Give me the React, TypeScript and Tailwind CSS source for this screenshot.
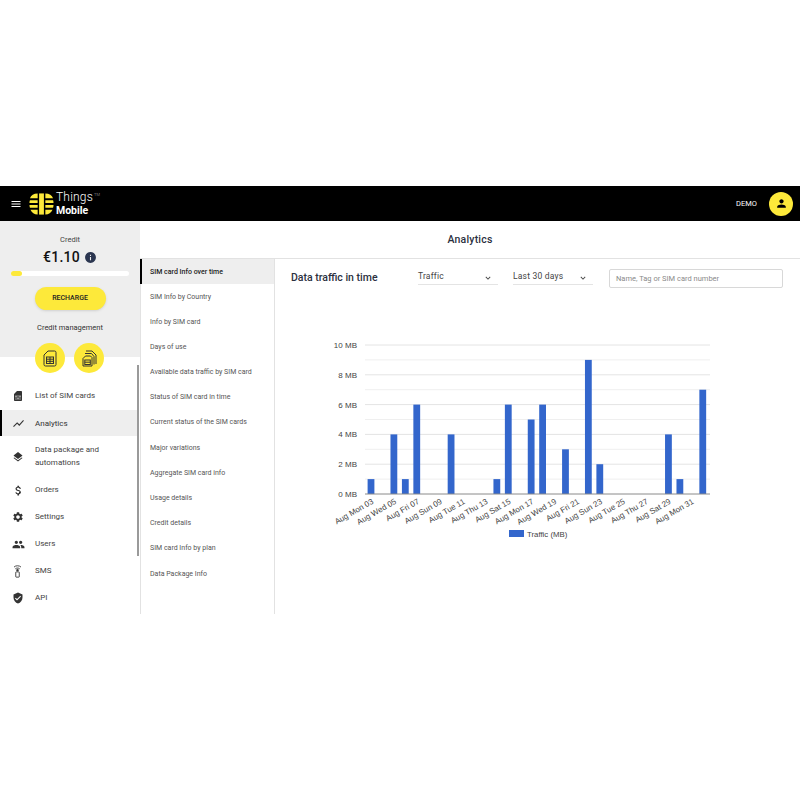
import { MdAttachMoney, MdExpandMore, MdInfo, MdLayers, MdMenu, MdPeople, MdPerson, MdSettings, MdShowChart, MdSimCard, MdVerifiedUser } from 'react-icons/md'
import type { ReactNode } from 'react'

const reports = [
  'SIM card Info over time',
  'SIM Info by Country',
  'Info by SIM card',
  'Days of use',
  'Available data traffic by SIM card',
  'Status of SIM card in time',
  'Current status of the SIM cards',
  'Major variations',
  'Aggregate SIM card info',
  'Usage details',
  'Credit details',
  'SIM card Info by plan',
  'Data Package Info',
]

const dayLabels = [
  'Aug Mon 03', 'Aug Wed 05', 'Aug Fri 07', 'Aug Sun 09', 'Aug Tue 11',
  'Aug Thu 13', 'Aug Sat 15', 'Aug Mon 17', 'Aug Wed 19', 'Aug Fri 21',
  'Aug Sun 23', 'Aug Tue 25', 'Aug Thu 27', 'Aug Sat 29', 'Aug Mon 31',
]

// day index -> MB
const traffic: [number, number][] = [
  [0, 1], [2, 4], [3, 1], [4, 6], [7, 4], [11, 1], [12, 6], [14, 5],
  [15, 6], [17, 3], [19, 9], [20, 2], [26, 4], [27, 1], [29, 7],
]

function Logo() {
  return (
    <svg width="25" height="24" viewBox="0 0 26 24">
      <path d="M9 1C5 1 2 3 1 6h8zM1 8c-.5 1-.5 2.500-.5 3h8.500V8zM.5 13c0 1 .2 2 .5 3h8v-3zM1.500 18c1.500 3 4 5 7.500 5v-5z" fill="#fde93a" />
      <path d="M17 1c4 0 7 2 8 5h-8zM25 8c.5 1 .5 2.500.5 3H17V8zM25.500 13c0 1-.2 2-.5 3h-8v-3zM24.500 18c-1.500 3-4 5-7.500 5v-5z" fill="#fde93a" />
      <rect x="10.500" y="1" width="5" height="22" fill="#fde93a" />
    </svg>
  )
}

function SimOne() {
  return (
    <svg width="14" height="17" viewBox="0 0 14 17" fill="none" stroke="#333" strokeWidth="1">
      <path d="M5 1h6.500A1.500 1.500 0 0 1 13 2.500v12a1.500 1.500 0 0 1-1.500 1.500h-9A1.500 1.500 0 0 1 1 14.500V5z" />
      <rect x="3.500" y="7" width="7" height="6.500" />
      <path d="M3.500 9.200h7M3.500 11.300h7M7 7v6.500" />
    </svg>
  )
}

function SimStack() {
  return (
    <svg width="15" height="17" viewBox="0 0 15 17" fill="none" stroke="#333" strokeWidth="1">
      <path d="M4 1h6l4 4v9" />
      <path d="M3 3.500h6.500l2.500 3v8" />
      <path d="M3.500 6h5l1.500 1.500v8.500H1V8.500z" />
      <rect x="2.800" y="10" width="5.500" height="4.500" />
      <path d="M2.800 12.200h5.500" />
    </svg>
  )
}

function Antenna() {
  return (
    <svg width="11" height="14" viewBox="0 0 12 16" fill="none" stroke="#333" strokeWidth="1">
      <path d="M2 3.500C4 1.500 8 1.500 10 3.500M3.500 5.500c1.500-1.200 3.500-1.200 5 0" />
      <circle cx="6" cy="7" r="1" fill="#333" />
      <rect x="4" y="9" width="4" height="6" rx="0.500" />
    </svg>
  )
}

function NavRow({ icon, children, height }: { icon: ReactNode; children: ReactNode; height: string }) {
  return (
    <div className={`flex items-center border-l-2 border-transparent pt-[1px] pl-[10px] ${height}`}>
      <div className="flex w-[23px] shrink-0 justify-start text-[#333]">{icon}</div>
      <div className="text-[8px] leading-[12.500px] text-[#444]">{children}</div>
    </div>
  )
}

function Sidebar() {
  return (
    <aside className="relative w-[140px] shrink-0">
      <div className="flex h-[136px] flex-col items-center bg-[#eeeeee]">
        <div className="mt-[14px] shrink-0 text-[7.500px] leading-[10px] text-[#444]">Credit</div>
        <div className="mt-[2px] flex shrink-0 items-center gap-[4px]">
          <span className="text-[14px] leading-[20px] font-medium tracking-[0.3px] text-[#111]">€1.10</span>
          <MdInfo size={13} className="text-[#2b3650]" />
        </div>
        <div className="mt-[4px] h-[5px] w-[118px] shrink-0 rounded-full bg-white">
          <div className="h-full w-[11px] rounded-full bg-[#fde93a]" />
        </div>
        <div className="mt-[11px] flex h-[23px] w-[71px] shrink-0 items-center justify-center rounded-full bg-[#fde93a] text-[7px] font-medium text-[#222] shadow-sm">
          RECHARGE
        </div>
        <div className="mt-[13px] shrink-0 text-[7.500px] leading-[10px] text-[#333]">Credit management</div>
        <div className="mt-[10px] -ml-[1px] flex shrink-0 gap-[9px]">
          <div className="flex h-[30px] w-[30px] items-center justify-center rounded-full bg-[#fde93a]"><SimOne /></div>
          <div className="flex h-[30px] w-[30px] items-center justify-center rounded-full bg-[#fde93a]"><SimStack /></div>
        </div>
      </div>
      <nav className="mt-[25px] flex flex-col">
        <NavRow height="h-[27px]" icon={<MdSimCard size={12} />}>List of SIM cards</NavRow>
        <div className="mt-[1px] flex h-[26px] w-[137px] items-center border-l-2 border-black bg-[#eeeeee] pt-[1px] pl-[10px]">
          <div className="flex w-[23px] shrink-0 text-[#333]"><MdShowChart size={13} /></div>
          <div className="text-[8px] text-[#333]">Analytics</div>
        </div>
        <NavRow height="h-[40px]" icon={<MdLayers size={12} />}><span className="block w-[80px]">Data package and automations</span></NavRow>
        <NavRow height="h-[27px]" icon={<MdAttachMoney size={13} />}>Orders</NavRow>
        <NavRow height="h-[27px]" icon={<MdSettings size={12} />}>Settings</NavRow>
        <NavRow height="h-[27px]" icon={<MdPeople size={13} />}>Users</NavRow>
        <NavRow height="h-[27px]" icon={<Antenna />}>SMS</NavRow>
        <NavRow height="h-[27px]" icon={<MdVerifiedUser size={12} />}>API</NavRow>
      </nav>
      {/* scrollbar thumb */}
      <div className="absolute top-[144px] right-[1px] h-[191px] w-[2px] bg-[#9a9a9a]" />
    </aside>
  )
}

function Select({ label }: { label: string }) {
  return (
    <div className="flex h-[17px] w-[80px] items-center justify-between border-b border-[#e4e4e4] pr-[5px]">
      <span className="text-[8.500px] tracking-[0.2px] text-[#444]">{label}</span>
      <MdExpandMore size={10} className="mt-[4px] text-[#444]" />
    </div>
  )
}

function TrafficChart() {
  const unit = 14.9
  const center = (i: number) => 371 + i * 11.44
  return (
    <svg width="400" height="210" viewBox="320 340 400 210" className="block" fontFamily="'Liberation Sans', Arial, sans-serif">
      {Array.from({ length: 10 }, (_, i) => (
        <line key={i} x1={365} x2={710} y1={345 + i * unit} y2={345 + i * unit} stroke={i % 2 === 0 ? '#e4e4e4' : '#efefef'} strokeWidth="1" />
      ))}
      {[10, 8, 6, 4, 2, 0].map((mb) => (
        <text key={mb} x={357} y={494 - mb * unit + 3} fontSize="8" textAnchor="end" fill="#444">{mb} MB</text>
      ))}
      {traffic.map(([day, mb]) => (
        <rect key={day} x={center(day) - 3.4} y={494 - mb * unit} width="6.800" height={mb * unit} fill="#3366cc" />
      ))}
      <line x1={365} x2={710} y1={494} y2={494} stroke="#8a8a8a" strokeWidth="1" />
      {dayLabels.map((label, i) => {
        const x = center(i * 2) + 3
        return (
          <text key={label} x={x} y={503} fontSize="8" textAnchor="end" fill="#444" transform={`rotate(-30 ${x} 503)`}>{label}</text>
        )
      })}
      <rect x={509} y={530} width={15} height={7} fill="#3366cc" />
      <text x={527} y={536.5} fontSize="7.800" fill="#444">Traffic (MB)</text>
    </svg>
  )
}

export default function App() {
  return (
    <div className="min-h-[800px] bg-white pt-[186px] font-['Roboto',sans-serif]">
      <header className="flex h-[35px] items-center bg-black pr-[7px] pl-[10px]">
        <MdMenu size={12} className="text-white" />
        <div className="ml-[7px]"><Logo /></div>
        <div className="ml-[2px] flex flex-col gap-[3px] text-white">
          <span className="flex items-start text-[12px] leading-[11px] font-light tracking-[0.2px]">
            Things<span className="ml-[1px] text-[4px] leading-[5px] text-[#aaa]">TM</span>
          </span>
          <span className="text-[10.500px] leading-[9px] font-bold">Mobile</span>
        </div>
        <span className="ml-auto text-[7.500px] text-white">DEMO</span>
        <div className="ml-[12px] flex h-[24px] w-[24px] items-center justify-center rounded-full bg-[#fde93a]">
          <MdPerson size={13} className="text-black" />
        </div>
      </header>
      <div className="flex h-[393px]">
        <Sidebar />
        <main className="flex min-w-0 flex-1 flex-col">
          <div className="flex h-[38px] shrink-0 items-center justify-center border-b border-[#e2e2e2] text-[10.500px] font-medium tracking-[0.2px] text-[#2b3040]">
            Analytics
          </div>
          <div className="flex min-h-0 flex-1">
            <div className="w-[135px] shrink-0 border-r border-l border-[#e2e2e2]">
              {reports.map((r, i) => (
                <div
                  key={r}
                  className={
                    i === 0
                      ? 'flex h-[25.200px] -ml-px items-center border-l-2 border-black bg-[#eeeeee] pt-[1px] pl-[8px] text-[7px] font-medium text-[#222]'
                      : 'flex h-[25.200px] items-center pl-[9px] text-[7px] text-[#555]'
                  }
                >
                  {r}
                </div>
              ))}
            </div>
            <div className="min-w-0 flex-1">
              <div className="mt-[9px] flex items-start pl-[16px]">
                <div className="flex h-[20px] w-[127px] items-center text-[10.500px] font-medium text-[#2b3040]">Data traffic in time</div>
                <Select label="Traffic" />
                <div className="ml-[15px]"><Select label="Last 30 days" /></div>
                <div className="mt-[1px] ml-[16px] flex h-[19px] w-[174px] items-center rounded-[2px] border border-[#d8d8d8] pl-[6px] text-[7.500px] text-[#8a8a8a]">
                  Name, Tag or SIM card number
                </div>
              </div>
              <div className="mt-[52px] pl-[45px]"><TrafficChart /></div>
            </div>
          </div>
        </main>
      </div>
    </div>
  )
}
